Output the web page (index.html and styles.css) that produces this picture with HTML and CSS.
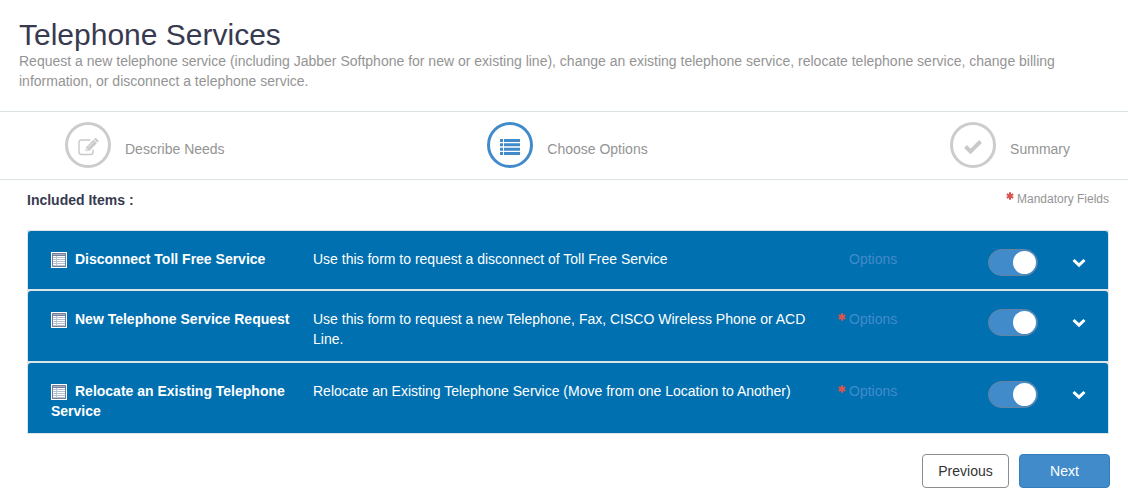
FILE: index.html
```
<!DOCTYPE html>
<html lang="en">
<head>
<meta charset="utf-8">
<meta name="viewport" content="width=device-width, initial-scale=1">
<title>Telephone Services</title>
<link rel="stylesheet" href="styles.css">
</head>
<body>
<svg class="sprite" aria-hidden="true">
  <symbol id="form" viewBox="0 0 16 16">
    <rect width="16" height="16" fill="#fff"/>
    <rect x="1" y="1" width="14" height="14" fill="#75809c"/>
    <rect x="2" y="2" width="12" height="1" fill="#a9b1c6"/>
    <rect x="2" y="4" width="12" height="10" fill="#fff"/>
    <path fill="#b9c0d2" d="M2 5h12v1H2zM2 7h12v1H2zM2 9h12v1H2zM2 11h12v1H2zM2 13h12v1H2zM5 4h1v10H5z"/>
  </symbol>
  <symbol id="star" viewBox="0 0 8 8">
    <path d="M4 .3v7.4M.8 2.1l6.4 3.8M7.2 2.1L.8 5.9" stroke="#d9534f" stroke-width="2" fill="none"/>
  </symbol>
  <symbol id="chevron" viewBox="0 0 14 10">
    <path d="M1.500 2l5.500 5.200L12.500 2" stroke="#fff" stroke-width="3" fill="none"/>
  </symbol>
</svg>

<header class="intro">
  <h1 class="title">Telephone Services</h1>
  <p class="summary">Request a new telephone service (including Jabber Softphone for new or existing line), change an existing telephone service, relocate telephone service, change billing information, or disconnect a telephone service.</p>
</header>

<ol class="steps">
  <li class="step">
    <span class="step-icon">
      <svg width="22" height="20" viewBox="0 0 22 20" fill="none" stroke="currentColor">
        <path d="M13.500 3H4.500A2.500 2.500 0 0 0 2 5.500V15a2.500 2.500 0 0 0 2.500 2.500h9A2.500 2.500 0 0 0 16 15v-2.500" stroke-width="1.400"/>
        <path d="M8.500 14.200l.5-4 7.400-7.400 3.500 3.500-7.500 7.500zM17 2.200l1-1q.6-.5 1.200 0l2.200 2.200q.5.600 0 1.200l-1 1z" fill="currentColor" stroke="none"/>
        <path d="M11.200 10.400l5.200-5.200M9.800 11.200v1.700h1.700" stroke="#fff" stroke-width=".7"/>
      </svg>
    </span>
    <span>Describe Needs</span>
  </li>
  <li class="step active" aria-current="step">
    <span class="step-icon">
      <svg width="20" height="16" viewBox="0 0 20 16" fill="currentColor">
        <path d="M0 0h3v3H0zM4 0h16v3H4zM0 4.300h3v3H0zM4 4.300h16v3H4zM0 8.700h3v3H0zM4 8.700h16v3H4zM0 13h3v3H0zM4 13h16v3H4z"/>
      </svg>
    </span>
    <span>Choose Options</span>
  </li>
  <li class="step">
    <span class="step-icon">
      <svg width="20" height="16" viewBox="0 0 20 16" fill="none" stroke="currentColor">
        <path d="M2.500 7.500l5 5 10-10" stroke-width="4"/>
      </svg>
    </span>
    <span>Summary</span>
  </li>
</ol>

<main class="content">
  <div class="list-head">
    <h2 class="list-title">Included Items :</h2>
    <span class="legend"><svg class="star"><use href="#star"/></svg> Mandatory Fields</span>
  </div>

  <ul class="items">
    <li class="item">
      <strong class="name" id="n1"><svg class="form-icon"><use href="#form"/></svg>Disconnect Toll Free Service</strong>
      <span class="desc">Use this form to request a disconnect of Toll Free Service</span>
      <span class="options"><span class="mark"></span><a class="link" href="#">Options</a></span>
      <input class="toggle" type="checkbox" role="switch" aria-labelledby="n1" checked>
      <button class="expand" type="button" aria-label="Expand"><svg class="chevron"><use href="#chevron"/></svg></button>
    </li>
    <li class="item">
      <strong class="name" id="n2"><svg class="form-icon"><use href="#form"/></svg>New Telephone Service Request</strong>
      <span class="desc">Use this form to request a new Telephone, Fax, CISCO Wireless Phone or ACD Line.</span>
      <span class="options"><span class="mark"><svg class="star"><use href="#star"/></svg></span><a class="link" href="#">Options</a></span>
      <input class="toggle" type="checkbox" role="switch" aria-labelledby="n2" checked>
      <button class="expand" type="button" aria-label="Expand"><svg class="chevron"><use href="#chevron"/></svg></button>
    </li>
    <li class="item">
      <strong class="name" id="n3"><svg class="form-icon"><use href="#form"/></svg>Relocate an Existing Telephone Service</strong>
      <span class="desc">Relocate an Existing Telephone Service (Move from one Location to Another)</span>
      <span class="options"><span class="mark"><svg class="star"><use href="#star"/></svg></span><a class="link" href="#">Options</a></span>
      <input class="toggle" type="checkbox" role="switch" aria-labelledby="n3" checked>
      <button class="expand" type="button" aria-label="Expand"><svg class="chevron"><use href="#chevron"/></svg></button>
    </li>
  </ul>
</main>

<footer class="actions">
  <button class="btn" type="button">Previous</button>
  <button class="btn primary" type="button">Next</button>
</footer>
</body>
</html>
```
FILE: styles.css
```
* {
  box-sizing: border-box;
}

body {
  margin: 0;
  background: #fff;
  color: #343d47;
  font: 14px/20px "Liberation Sans", Arial, sans-serif;
}

.sprite {
  display: none;
}

.intro {
  padding: 18px 19px 20px;
}

.title {
  margin: 0;
  color: #383a50;
  font-size: 30px;
  font-weight: 400;
  line-height: 33px;
}

.summary {
  margin: 0;
  max-width: 1060px;
  color: #949494;
}

.steps {
  display: grid;
  grid-template-columns: 1fr auto 1fr;
  margin: 0;
  padding: 10px 58px 11px 65px;
  border: solid #dbe2e2;
  border-width: 1px 0;
  color: #949494;
  list-style: none;
}

.step {
  display: flex;
  align-items: center;
  gap: 14px;
}

.step:last-child {
  justify-self: end;
}

.step > span:last-child {
  padding-top: 8px;
}

.step-icon {
  display: flex;
  align-items: center;
  justify-content: center;
  width: 46px;
  height: 46px;
  padding-top: 4px;
  border: 3px solid #ccc;
  border-radius: 50%;
  color: #c9c9c9;
}

.active .step-icon {
  border-color: #428bca;
  color: #428bca;
}

.content {
  padding: 10px 19px 0 27px;
}

.list-head {
  display: flex;
  justify-content: space-between;
  margin-bottom: 20px;
}

.list-title {
  margin: 0;
  color: #383a50;
  font-size: 14px;
  line-height: 20px;
}

.legend {
  color: #949494;
  font-size: 12px;
  line-height: 18px;
}

.star {
  width: 8px;
  height: 8px;
  vertical-align: 3px;
}

.items {
  display: grid;
  gap: 2px;
  margin: 0;
  padding: 0;
  border: 1px solid #dde5ea;
  background: #dde5ea;
  list-style: none;
}

.item {
  display: grid;
  grid-template-columns: 262fr 525fr 150px 84px 14px;
  align-items: start;
  padding: 18px 22px 12px 23px;
  border-radius: 3px 3px 0 0;
  background: #0070b0;
  color: #fff;
}

.name {
  padding-right: 20px;
}

.form-icon {
  width: 16px;
  height: 16px;
  margin-right: 8px;
  vertical-align: -4px;
}

.desc {
  padding-right: 20px;
}

.options {
  display: flex;
}

.mark {
  width: 11px;
}

.link {
  color: #428bca;
  text-decoration: none;
}

.toggle {
  display: flex;
  align-items: center;
  justify-content: flex-end;
  width: 50px;
  height: 27px;
  margin: 0;
  padding: 1px;
  border: 1px solid #6683a3;
  border-radius: 14px;
  background: #428bca;
  appearance: none;
}

.toggle::before {
  width: 23px;
  height: 23px;
  border-radius: 50%;
  background: #fff;
  content: "";
}

.toggle:not(:checked) {
  justify-content: flex-start;
  background: #8a98a6;
}

.expand {
  display: flex;
  align-items: center;
  justify-content: center;
  height: 28px;
  padding: 0;
  border: 0;
  background: none;
}

.chevron {
  width: 14px;
  height: 10px;
}

.actions {
  display: flex;
  justify-content: flex-end;
  gap: 10px;
  padding: 20px 18px 16px;
}

.btn {
  min-width: 87px;
  height: 34px;
  padding: 0 15px;
  border: 1px solid #8c8c8c;
  border-radius: 4px;
  background: #fff;
  color: #333;
  font: inherit;
}

.primary {
  min-width: 91px;
  border-color: #357ebd;
  background: #428bca;
  color: #fff;
}
```
